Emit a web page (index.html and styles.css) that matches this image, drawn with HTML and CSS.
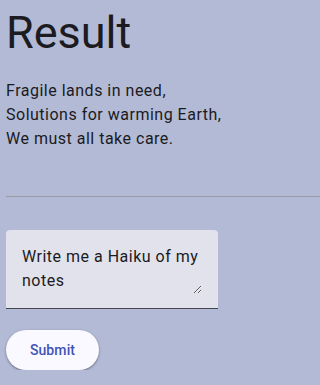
FILE: index.html
```html
<!DOCTYPE html>
<html lang="en">
<head>
<meta charset="utf-8">
<link rel="stylesheet" href="styles.css">
</head>
<body>
<main class="page">
  <h1 class="title">Result</h1>
  <p class="poem">Fragile lands in need,<br>Solutions for warming Earth,<br>We must all take care.</p>
  <hr class="divider">
  <div class="field">
    <textarea class="prompt" rows="2">Write me a Haiku of my notes</textarea>
  </div>
  <button class="submit" type="button">Submit</button>
</main>
</body>
</html>
```

FILE: styles.css
```css
html, body {
  margin: 0;
  padding: 0;
  background: #b3bad6;
}
.page {
  display: flex;
  flex-direction: column;
  align-items: flex-start;
  padding-left: 6px;
  font-family: Roboto, "Noto Sans", sans-serif;
  color: #1b1b21;
}
.title {
  margin: 7px 0 0 0;
  font-size: 45px;
  font-weight: 400;
  line-height: 52px;
  letter-spacing: 0;
}
.poem {
  margin: 20px 0 0 0;
  font-size: 16px;
  line-height: 24px;
  letter-spacing: 0.5px;
}
.divider {
  align-self: stretch;
  margin: 45px 0 0 0;
  border: 0;
  height: 1px;
  background: #9a9ba3;
}
.field {
  box-sizing: border-box;
  width: 212px;
  margin-top: 33px;
  padding: 15px 16px 14px 16px;
  border-bottom: 1px solid #44464f;
  border-radius: 4px 4px 0 0;
  background: #e1e2ec;
}
.prompt {
  display: block;
  box-sizing: border-box;
  width: 100%;
  height: 49px;
  margin: 0;
  padding: 0;
  border: 0;
  outline: none;
  overflow: hidden;
  background: transparent;
  font-family: Roboto, "Noto Sans", sans-serif;
  font-size: 16px;
  line-height: 24px;
  letter-spacing: 0.5px;
  color: #1b1b21;
  resize: vertical;
}
.submit {
  margin-top: 21px;
  width: 93px;
  height: 40px;
  border: 0;
  border-radius: 20px;
  background: #f9f9ff;
  color: #4153b4;
  font-family: Roboto, "Noto Sans", sans-serif;
  font-size: 14px;
  font-weight: 500;
  letter-spacing: 0.1px;
  box-shadow: 0 1px 3px rgba(0,0,0,0.3), 0 1px 1px rgba(0,0,0,0.15);
}
```
